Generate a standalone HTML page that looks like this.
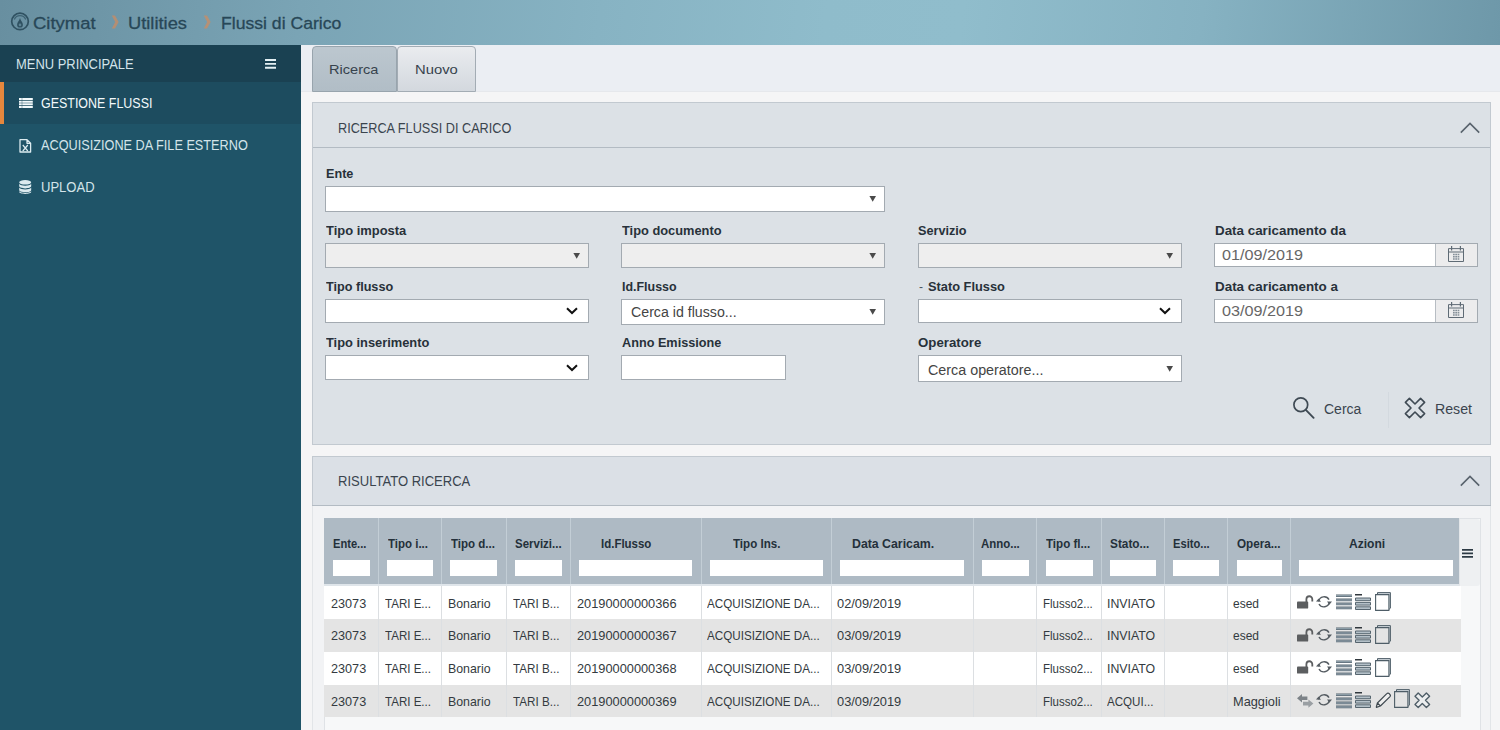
<!DOCTYPE html>
<html lang="it"><head><meta charset="utf-8"><title>Citymat - Flussi di Carico</title>
<style>
html,body{margin:0;padding:0;}
body{width:1500px;height:730px;overflow:hidden;position:relative;background:#f5f5f6;font-family:"Liberation Sans",sans-serif;}
.b{position:absolute;box-sizing:border-box;display:block;}
.t{position:absolute;white-space:nowrap;transform-origin:0 50%;display:block;}
</style></head><body>
<div class="b" style="left:0px;top:0px;width:1500px;height:45px;background:linear-gradient(97deg,#688fa0 0%,#7aa4b5 20%,#87b3c3 40%,#8fbccb 55%,#90bdcc 64%,#86b2c2 80%,#6e98a9 100%);"></div>
<svg class="b" style="left:9px;top:10px;" width="22" height="23" viewBox="0 0 22 23"><circle cx="11" cy="11.4" r="8.3" fill="none" stroke="#2f5161" stroke-width="1.7"/><path d="M5.3 9.4 A6.2 6.2 0 0 1 16.7 9.4" fill="none" stroke="#2f5161" stroke-width="1.2" opacity=".75"/><path d="M11 8 C11.7 10.8 13.9 12.4 13.9 14.7 A2.9 2.9 0 0 1 8.1 14.7 C8.1 12.4 10.3 10.8 11 8 Z" fill="#2f5161"/><circle cx="11" cy="14.9" r="1.3" fill="#6f97a8" opacity=".7"/></svg>
<span class="t" style="left:33.0px;top:15px;font-size:17.4px;line-height:17.4px;color:#274757;transform:scaleX(1.0615);-webkit-text-stroke:0.3px #274757;">Citymat</span>
<span class="t" style="left:128.4px;top:15px;font-size:17.4px;line-height:17.4px;color:#274757;transform:scaleX(1.0522);-webkit-text-stroke:0.3px #274757;">Utilities</span>
<span class="t" style="left:220.6px;top:15px;font-size:17.4px;line-height:17.4px;color:#274757;transform:scaleX(1.0124);-webkit-text-stroke:0.3px #274757;">Flussi di Carico</span>
<svg class="b" style="left:111.2px;top:15.0px;" width="9" height="14" viewBox="0 0 9 14"><path d="M0.8 0.6 L4 0.6 L7.6 7 L4 13.4 L0.8 13.4 L4.2 7 Z" fill="#d88a58" opacity=".66"/></svg>
<svg class="b" style="left:202.6px;top:15.0px;" width="9" height="14" viewBox="0 0 9 14"><path d="M0.8 0.6 L4 0.6 L7.6 7 L4 13.4 L0.8 13.4 L4.2 7 Z" fill="#d88a58" opacity=".66"/></svg>
<div class="b" style="left:0px;top:45px;width:301px;height:685px;background:#1f5468;"></div>
<div class="b" style="left:0px;top:45px;width:301px;height:37px;background:#1a4152;"></div>
<div class="b" style="left:0px;top:82px;width:301px;height:42px;background:#1d4c5f;"></div>
<div class="b" style="left:0px;top:82px;width:4px;height:42px;background:#e5873d;"></div>
<span class="t" style="left:16.0px;top:57px;font-size:14px;line-height:14px;color:#d3e4ea;transform:scaleX(0.9237);">MENU PRINCIPALE</span>
<svg class="b" style="left:264.6px;top:59px;" width="11.7" height="9.7" viewBox="0 0 12 10"><path d="M0 0h12v2H0zM0 4h12v2H0zM0 8h12v2H0z" fill="#e4f0f4"/></svg>
<span class="t" style="left:41.0px;top:96px;font-size:14px;line-height:14px;color:#f2f9fb;transform:scaleX(0.8894);">GESTIONE FLUSSI</span>
<span class="t" style="left:41.0px;top:138px;font-size:14px;line-height:14px;color:#d3e4ea;transform:scaleX(0.9073);">ACQUISIZIONE DA FILE ESTERNO</span>
<span class="t" style="left:41.2px;top:180px;font-size:14px;line-height:14px;color:#d3e4ea;transform:scaleX(0.9310);">UPLOAD</span>
<svg class="b" style="left:19px;top:98px;" width="14" height="10" viewBox="0 0 14 10"><g fill="#f2f9fb"><path d="M0 0h2.8v2H0zM3.2 0H13.8v2H3.2zM0 2.65h2.8v2H0zM3.2 2.65H13.8v2H3.2zM0 5.3h2.8v2H0zM3.2 5.3H13.8v2H3.2zM0 7.95h2.8v2H0zM3.2 7.95H13.8v2H3.2z"/></g></svg>
<svg class="b" style="left:18.6px;top:138.8px;" width="13" height="14" viewBox="0 0 13 14"><path d="M1 0.7H8L11.6 4.3V13H1Z M8 0.7V4.3H11.6" fill="none" stroke="#dcebf0" stroke-width="1.3" stroke-linejoin="round"/><path d="M3.8 6L8.8 12M8.8 6L3.8 12" stroke="#dcebf0" stroke-width="1.2"/></svg>
<svg class="b" style="left:18.8px;top:180.2px;" width="13" height="14" viewBox="0 0 13 14"><g fill="#dcebf0"><ellipse cx="6.2" cy="2.3" rx="6" ry="2.3"/><path d="M0.2 3.8c1 1.4 3.2 1.9 6 1.9s5-.5 6-1.9v2.3c0 1.3-2.7 2.3-6 2.3s-6-1-6-2.3z"/><path d="M0.2 7.6c1 1.4 3.2 1.9 6 1.9s5-.5 6-1.9v2.3c0 1.3-2.7 2.3-6 2.3s-6-1-6-2.3z" transform="translate(0,0)"/><path d="M0.2 11.2c1 1.2 3.2 1.7 6 1.7s5-.5 6-1.7v.6c0 1.3-2.7 2.1-6 2.1s-6-.8-6-2.1z"/></g></svg>
<div class="b" style="left:301px;top:45px;width:1199px;height:46px;background:#ebeef3;"></div>
<div class="b" style="left:301px;top:91px;width:1199px;height:1px;background:#e6e8ec;"></div>
<div class="b" style="left:312px;top:46px;width:85.4px;height:45.5px;background:linear-gradient(#bcc7cf,#b1bdc6);border:1px solid #98a4ad;border-radius:4px 4px 0 0;"></div>
<div class="b" style="left:397.3px;top:46px;width:78.9px;height:45.5px;background:linear-gradient(#eaecef,#d3d8de);border:1px solid #a3acb4;border-radius:4px 4px 0 0;"></div>
<span class="t" style="left:329.4px;top:63px;font-size:13.6px;line-height:13.6px;color:#37434d;transform:scaleX(1.0716);">Ricerca</span>
<span class="t" style="left:414.6px;top:63px;font-size:13.6px;line-height:13.6px;color:#37434d;transform:scaleX(1.0887);">Nuovo</span>
<div class="b" style="left:312px;top:102px;width:1179px;height:343px;background:#dce1e6;border:1px solid #c2c9d0;"></div>
<div class="b" style="left:313px;top:147px;width:1177px;height:1px;background:#b3bbc3;"></div>
<span class="t" style="left:338.0px;top:121px;font-size:14.4px;line-height:14.4px;color:#3a444e;transform:scaleX(0.8809);">RICERCA FLUSSI DI CARICO</span>
<svg class="b" style="left:1459.5px;top:122px;" width="20" height="12" viewBox="0 0 20 12"><path d="M0.8 10.6L10 1.4L19.2 10.6" fill="none" stroke="#59636d" stroke-width="1.6"/></svg>
<span class="t" style="left:325.6px;top:167px;font-size:13.2px;line-height:13.2px;color:#28313a;font-weight:bold;transform:scaleX(0.9579);">Ente</span>
<div class="b" style="left:325px;top:186px;width:560px;height:26px;background:#ffffff;border:1px solid #a3aab1;"></div>
<svg class="b" style="left:869px;top:196.0px;" width="8" height="7" viewBox="0 0 8 7"><path d="M0.4 0H7L3.7 5.8Z" fill="#4a4a4a"/></svg>
<span class="t" style="left:325.6px;top:224px;font-size:13.2px;line-height:13.2px;color:#28313a;font-weight:bold;transform:scaleX(0.9817);">Tipo imposta</span>
<div class="b" style="left:325px;top:243px;width:264px;height:25.4px;background:#eeeeee;border:1px solid #a3aab1;"></div>
<svg class="b" style="left:573px;top:252.7px;" width="8" height="7" viewBox="0 0 8 7"><path d="M0.4 0H7L3.7 5.8Z" fill="#4a4a4a"/></svg>
<span class="t" style="left:622.2px;top:224px;font-size:13.2px;line-height:13.2px;color:#28313a;font-weight:bold;transform:scaleX(0.9725);">Tipo documento</span>
<div class="b" style="left:621px;top:243px;width:264px;height:25.4px;background:#eeeeee;border:1px solid #a3aab1;"></div>
<svg class="b" style="left:869px;top:252.7px;" width="8" height="7" viewBox="0 0 8 7"><path d="M0.4 0H7L3.7 5.8Z" fill="#4a4a4a"/></svg>
<span class="t" style="left:918.4px;top:224px;font-size:13.2px;line-height:13.2px;color:#28313a;font-weight:bold;transform:scaleX(0.9601);">Servizio</span>
<div class="b" style="left:918px;top:243px;width:264px;height:25.4px;background:#eeeeee;border:1px solid #a3aab1;"></div>
<svg class="b" style="left:1166px;top:252.7px;" width="8" height="7" viewBox="0 0 8 7"><path d="M0.4 0H7L3.7 5.8Z" fill="#4a4a4a"/></svg>
<span class="t" style="left:1214.8px;top:224px;font-size:13.2px;line-height:13.2px;color:#28313a;font-weight:bold;transform:scaleX(1.0146);">Data caricamento da</span>
<div class="b" style="left:1214px;top:243px;width:264px;height:23.6px;background:#fff;border:1px solid #a3aab1;"></div>
<div class="b" style="left:1434.5px;top:244px;width:42.5px;height:21.6px;background:#ececed;border-left:1px solid #b7bdc3;"></div>
<svg class="b" style="left:1448px;top:246.2px;" width="16" height="16" viewBox="0 0 16 16"><g fill="none" stroke="#5f6b75" stroke-width="1"><path d="M0.5 2.6H15.5V15.5H0.5Z"/><path d="M0.5 6H15.5"/><path d="M3.6 0V4.4M12.4 0V4.4" stroke-width="1.2"/></g><g fill="#848f98"><path d="M5 7.8h1.7v1.5H5zM7.3 7.8h1.7v1.5H7.3zM9.6 7.8h1.7v1.5H9.6zM5 10h1.7v1.5H5zM7.3 10h1.7v1.5H7.3zM9.6 10h1.7v1.5H9.6zM5 12.2h1.7v1.5H5zM7.3 12.2h1.7v1.5H7.3zM9.6 12.2h1.7v1.5H9.6z"/></g></svg>
<span class="t" style="left:1221.6px;top:247px;font-size:15px;line-height:15px;color:#666;transform:scaleX(1.0789);">01/09/2019</span>
<span class="t" style="left:325.6px;top:280px;font-size:13.2px;line-height:13.2px;color:#28313a;font-weight:bold;transform:scaleX(0.9578);">Tipo flusso</span>
<div class="b" style="left:325px;top:299px;width:264px;height:23.6px;background:#fff;border:1px solid #a3aab1;"></div>
<svg class="b" style="left:565.8px;top:307.2px;" width="12" height="8" viewBox="0 0 12 8"><path d="M1 1.2L6 6L11 1.2" fill="none" stroke="#111" stroke-width="2"/></svg>
<span class="t" style="left:622.2px;top:280px;font-size:13.2px;line-height:13.2px;color:#28313a;font-weight:bold;transform:scaleX(0.9424);">Id.Flusso</span>
<div class="b" style="left:621px;top:299px;width:264px;height:26px;background:#ffffff;border:1px solid #a3aab1;"></div>
<svg class="b" style="left:869px;top:309.0px;" width="8" height="7" viewBox="0 0 8 7"><path d="M0.4 0H7L3.7 5.8Z" fill="#4a4a4a"/></svg>
<span class="t" style="left:630.8px;top:305px;font-size:14px;line-height:14px;color:#444;transform:scaleX(1.0128);">Cerca id flusso...</span>
<span class="t" style="left:918.6px;top:280px;font-size:13.2px;line-height:13.2px;color:#4a545d;transform:scaleX(0.9100);">-</span>
<span class="t" style="left:927.8px;top:280px;font-size:13.2px;line-height:13.2px;color:#28313a;font-weight:bold;transform:scaleX(0.9721);">Stato Flusso</span>
<div class="b" style="left:918px;top:299px;width:264px;height:23.6px;background:#fff;border:1px solid #a3aab1;"></div>
<svg class="b" style="left:1158.8px;top:307.2px;" width="12" height="8" viewBox="0 0 12 8"><path d="M1 1.2L6 6L11 1.2" fill="none" stroke="#111" stroke-width="2"/></svg>
<span class="t" style="left:1214.8px;top:280px;font-size:13.2px;line-height:13.2px;color:#28313a;font-weight:bold;transform:scaleX(1.0161);">Data caricamento a</span>
<div class="b" style="left:1214px;top:299px;width:264px;height:23.6px;background:#fff;border:1px solid #a3aab1;"></div>
<div class="b" style="left:1434.5px;top:300px;width:42.5px;height:21.6px;background:#ececed;border-left:1px solid #b7bdc3;"></div>
<svg class="b" style="left:1448px;top:302.2px;" width="16" height="16" viewBox="0 0 16 16"><g fill="none" stroke="#5f6b75" stroke-width="1"><path d="M0.5 2.6H15.5V15.5H0.5Z"/><path d="M0.5 6H15.5"/><path d="M3.6 0V4.4M12.4 0V4.4" stroke-width="1.2"/></g><g fill="#848f98"><path d="M5 7.8h1.7v1.5H5zM7.3 7.8h1.7v1.5H7.3zM9.6 7.8h1.7v1.5H9.6zM5 10h1.7v1.5H5zM7.3 10h1.7v1.5H7.3zM9.6 10h1.7v1.5H9.6zM5 12.2h1.7v1.5H5zM7.3 12.2h1.7v1.5H7.3zM9.6 12.2h1.7v1.5H9.6z"/></g></svg>
<span class="t" style="left:1221.6px;top:303px;font-size:15px;line-height:15px;color:#666;transform:scaleX(1.0789);">03/09/2019</span>
<span class="t" style="left:325.6px;top:336px;font-size:13.2px;line-height:13.2px;color:#28313a;font-weight:bold;transform:scaleX(0.9745);">Tipo inserimento</span>
<div class="b" style="left:325px;top:355.4px;width:264px;height:24.2px;background:#fff;border:1px solid #a3aab1;"></div>
<svg class="b" style="left:565.8px;top:363.9px;" width="12" height="8" viewBox="0 0 12 8"><path d="M1 1.2L6 6L11 1.2" fill="none" stroke="#111" stroke-width="2"/></svg>
<span class="t" style="left:622.2px;top:336px;font-size:13.2px;line-height:13.2px;color:#28313a;font-weight:bold;transform:scaleX(0.9612);">Anno Emissione</span>
<div class="b" style="left:621px;top:355.4px;width:165px;height:24.2px;background:#fff;border:1px solid #a3aab1;"></div>
<span class="t" style="left:918.4px;top:336px;font-size:13.2px;line-height:13.2px;color:#28313a;font-weight:bold;transform:scaleX(1.0050);">Operatore</span>
<div class="b" style="left:918px;top:355.4px;width:264px;height:26.6px;background:#ffffff;border:1px solid #a3aab1;"></div>
<svg class="b" style="left:1166px;top:365.7px;" width="8" height="7" viewBox="0 0 8 7"><path d="M0.4 0H7L3.7 5.8Z" fill="#4a4a4a"/></svg>
<span class="t" style="left:927.8px;top:363px;font-size:14px;line-height:14px;color:#444;transform:scaleX(1.0227);">Cerca operatore...</span>
<svg class="b" style="left:1292px;top:395.6px;" width="23" height="23" viewBox="0 0 23 23"><circle cx="8.8" cy="8.8" r="6.9" fill="none" stroke="#3f4a54" stroke-width="1.7"/><path d="M13.8 13.8L21.6 21.8" stroke="#3f4a54" stroke-width="1.9" stroke-linecap="round"/></svg>
<span class="t" style="left:1324.0px;top:402px;font-size:14px;line-height:14px;color:#3a444e;">Cerca</span>
<div class="b" style="left:1388px;top:392px;width:1px;height:36px;background:#d3d9df;"></div>
<svg class="b" style="left:1404px;top:396.6px;" width="22" height="22" viewBox="0 0 22 22"><path d="M5.4 1.4L11 7L16.6 1.4L20.6 5.4L15 11L20.6 16.6L16.6 20.6L11 15L5.4 20.6L1.4 16.6L7 11L1.4 5.4Z" fill="none" stroke="#3f4a54" stroke-width="1.6" stroke-linejoin="round"/></svg>
<span class="t" style="left:1435.2px;top:402px;font-size:14px;line-height:14px;color:#3a444e;transform:scaleX(1.0117);">Reset</span>
<div class="b" style="left:312px;top:456px;width:1179px;height:290px;background:#f2f3f5;border:1px solid #e2e5e8;border-bottom:0;"></div>
<div class="b" style="left:312px;top:456px;width:1179px;height:50px;background:#dbe0e6;border:1px solid #c2c9d0;border-bottom:0;"></div>
<div class="b" style="left:312px;top:505px;width:1179px;height:1px;background:#b3bbc3;"></div>
<span class="t" style="left:338.0px;top:474px;font-size:14.4px;line-height:14.4px;color:#3a444e;transform:scaleX(0.9059);">RISULTATO RICERCA</span>
<svg class="b" style="left:1459.5px;top:475px;" width="20" height="12" viewBox="0 0 20 12"><path d="M0.8 10.6L10 1.4L19.2 10.6" fill="none" stroke="#59636d" stroke-width="1.6"/></svg>
<div class="b" style="left:324px;top:518px;width:1156.6px;height:212px;background:#f7f8f9;border:1px solid #dfe2e6;border-bottom:0;"></div>
<div class="b" style="left:324.4px;top:518.4px;width:1134.2px;height:66px;background:#aebac4;"></div>
<div class="b" style="left:324.4px;top:584.4px;width:1134.2px;height:1.6px;background:#dfe5ea;"></div>
<div class="b" style="left:1458.6px;top:519px;width:21.4px;height:67px;background:#eef0f2;border-radius:0 3px 3px 0;border-left:1px solid #e3e6e9;"></div>
<svg class="b" style="left:1462.4px;top:549px;" width="11" height="9" viewBox="0 0 11 9"><path d="M0 0h11v1.8H0zM0 3.5h11v1.8H0zM0 7h11v1.8H0z" fill="#2c3a44"/></svg>
<div class="b" style="left:324.4px;top:586.3px;width:1136.3px;height:32.90000000000009px;background:#ffffff;"></div>
<div class="b" style="left:324.4px;top:619.2px;width:1136.3px;height:32.59999999999991px;background:#e4e4e4;"></div>
<div class="b" style="left:324.4px;top:651.8px;width:1136.3px;height:32.90000000000009px;background:#ffffff;"></div>
<div class="b" style="left:324.4px;top:684.7px;width:1136.3px;height:32.09999999999991px;background:#e4e4e4;"></div>
<div class="b" style="left:377.9px;top:518.4px;width:1px;height:66px;background:#c3ced6;"></div>
<div class="b" style="left:377.9px;top:586.3px;width:1px;height:131px;background:#dcdfe2;"></div>
<div class="b" style="left:440.9px;top:518.4px;width:1px;height:66px;background:#c3ced6;"></div>
<div class="b" style="left:440.9px;top:586.3px;width:1px;height:131px;background:#dcdfe2;"></div>
<div class="b" style="left:505.5px;top:518.4px;width:1px;height:66px;background:#c3ced6;"></div>
<div class="b" style="left:505.5px;top:586.3px;width:1px;height:131px;background:#dcdfe2;"></div>
<div class="b" style="left:569.9px;top:518.4px;width:1px;height:66px;background:#c3ced6;"></div>
<div class="b" style="left:569.9px;top:586.3px;width:1px;height:131px;background:#dcdfe2;"></div>
<div class="b" style="left:700.9px;top:518.4px;width:1px;height:66px;background:#c3ced6;"></div>
<div class="b" style="left:700.9px;top:586.3px;width:1px;height:131px;background:#dcdfe2;"></div>
<div class="b" style="left:831.3px;top:518.4px;width:1px;height:66px;background:#c3ced6;"></div>
<div class="b" style="left:831.3px;top:586.3px;width:1px;height:131px;background:#dcdfe2;"></div>
<div class="b" style="left:973.1px;top:518.4px;width:1px;height:66px;background:#c3ced6;"></div>
<div class="b" style="left:973.1px;top:586.3px;width:1px;height:131px;background:#dcdfe2;"></div>
<div class="b" style="left:1036.1px;top:518.4px;width:1px;height:66px;background:#c3ced6;"></div>
<div class="b" style="left:1036.1px;top:586.3px;width:1px;height:131px;background:#dcdfe2;"></div>
<div class="b" style="left:1100.5px;top:518.4px;width:1px;height:66px;background:#c3ced6;"></div>
<div class="b" style="left:1100.5px;top:586.3px;width:1px;height:131px;background:#dcdfe2;"></div>
<div class="b" style="left:1163.9px;top:518.4px;width:1px;height:66px;background:#c3ced6;"></div>
<div class="b" style="left:1163.9px;top:586.3px;width:1px;height:131px;background:#dcdfe2;"></div>
<div class="b" style="left:1227.1px;top:518.4px;width:1px;height:66px;background:#c3ced6;"></div>
<div class="b" style="left:1227.1px;top:586.3px;width:1px;height:131px;background:#dcdfe2;"></div>
<div class="b" style="left:1290.1px;top:518.4px;width:1px;height:66px;background:#c3ced6;"></div>
<div class="b" style="left:1290.1px;top:586.3px;width:1px;height:131px;background:#dcdfe2;"></div>
<span class="t" style="left:333.2px;top:538px;font-size:12.6px;line-height:12.6px;color:#24303a;font-weight:bold;transform:scaleX(0.8834);">Ente...</span>
<span class="t" style="left:387.6px;top:538px;font-size:12.6px;line-height:12.6px;color:#24303a;font-weight:bold;transform:scaleX(0.9119);">Tipo i...</span>
<span class="t" style="left:450.6px;top:538px;font-size:12.6px;line-height:12.6px;color:#24303a;font-weight:bold;transform:scaleX(0.9155);">Tipo d...</span>
<span class="t" style="left:514.8px;top:538px;font-size:12.6px;line-height:12.6px;color:#24303a;font-weight:bold;transform:scaleX(0.9115);">Servizi...</span>
<span class="t" style="left:601.4px;top:538px;font-size:12.6px;line-height:12.6px;color:#24303a;font-weight:bold;transform:scaleX(0.9113);">Id.Flusso</span>
<span class="t" style="left:733.4px;top:538px;font-size:12.6px;line-height:12.6px;color:#24303a;font-weight:bold;transform:scaleX(0.9191);">Tipo Ins.</span>
<span class="t" style="left:852.0px;top:538px;font-size:12.6px;line-height:12.6px;color:#24303a;font-weight:bold;transform:scaleX(0.9781);">Data Caricam.</span>
<span class="t" style="left:981.4px;top:538px;font-size:12.6px;line-height:12.6px;color:#24303a;font-weight:bold;transform:scaleX(0.9088);">Anno...</span>
<span class="t" style="left:1046.0px;top:538px;font-size:12.6px;line-height:12.6px;color:#24303a;font-weight:bold;transform:scaleX(0.9196);">Tipo fl...</span>
<span class="t" style="left:1110.0px;top:538px;font-size:12.6px;line-height:12.6px;color:#24303a;font-weight:bold;transform:scaleX(0.9380);">Stato...</span>
<span class="t" style="left:1173.0px;top:538px;font-size:12.6px;line-height:12.6px;color:#24303a;font-weight:bold;transform:scaleX(0.8860);">Esito...</span>
<span class="t" style="left:1236.6px;top:538px;font-size:12.6px;line-height:12.6px;color:#24303a;font-weight:bold;transform:scaleX(0.9293);">Opera...</span>
<span class="t" style="left:1349.0px;top:538px;font-size:12.6px;line-height:12.6px;color:#24303a;font-weight:bold;transform:scaleX(0.9578);">Azioni</span>
<div class="b" style="left:333px;top:560px;width:37.4px;height:16px;background:#fff;"></div>
<div class="b" style="left:387.4px;top:560px;width:45.6px;height:16px;background:#fff;"></div>
<div class="b" style="left:450px;top:560px;width:47.4px;height:16px;background:#fff;"></div>
<div class="b" style="left:514.6px;top:560px;width:47.0px;height:16px;background:#fff;"></div>
<div class="b" style="left:579px;top:560px;width:113.4px;height:16px;background:#fff;"></div>
<div class="b" style="left:709.6px;top:560px;width:113.4px;height:16px;background:#fff;"></div>
<div class="b" style="left:840px;top:560px;width:124.4px;height:16px;background:#fff;"></div>
<div class="b" style="left:981.6px;top:560px;width:47.4px;height:16px;background:#fff;"></div>
<div class="b" style="left:1046px;top:560px;width:47.4px;height:16px;background:#fff;"></div>
<div class="b" style="left:1110px;top:560px;width:46px;height:16px;background:#fff;"></div>
<div class="b" style="left:1173px;top:560px;width:46.4px;height:16px;background:#fff;"></div>
<div class="b" style="left:1236.6px;top:560px;width:45.4px;height:16px;background:#fff;"></div>
<div class="b" style="left:1299px;top:560px;width:154.4px;height:16px;background:#fff;"></div>
<span class="t" style="left:330.8px;top:598px;font-size:12.6px;line-height:12.6px;color:#333a40;transform:scaleX(1.0046);">23073</span>
<span class="t" style="left:385.0px;top:598px;font-size:12.6px;line-height:12.6px;color:#333a40;transform:scaleX(0.9168);">TARI E...</span>
<span class="t" style="left:448.4px;top:598px;font-size:12.6px;line-height:12.6px;color:#333a40;transform:scaleX(0.9809);">Bonario</span>
<span class="t" style="left:512.6px;top:598px;font-size:12.6px;line-height:12.6px;color:#333a40;transform:scaleX(0.9248);">TARI B...</span>
<span class="t" style="left:576.8px;top:598px;font-size:12.6px;line-height:12.6px;color:#333a40;transform:scaleX(1.0152);">20190000000366</span>
<span class="t" style="left:707.2px;top:598px;font-size:12.6px;line-height:12.6px;color:#333a40;transform:scaleX(0.9260);">ACQUISIZIONE DA...</span>
<span class="t" style="left:837.4px;top:598px;font-size:12.6px;line-height:12.6px;color:#333a40;transform:scaleX(1.0180);">02/09/2019</span>
<span class="t" style="left:1043.4px;top:598px;font-size:12.6px;line-height:12.6px;color:#333a40;transform:scaleX(0.9117);">Flusso2...</span>
<span class="t" style="left:1107.4px;top:598px;font-size:12.6px;line-height:12.6px;color:#333a40;transform:scaleX(0.9788);">INVIATO</span>
<span class="t" style="left:1233.4px;top:598px;font-size:12.6px;line-height:12.6px;color:#333a40;transform:scaleX(0.9516);">esed</span>
<span class="t" style="left:330.8px;top:630px;font-size:12.6px;line-height:12.6px;color:#333a40;transform:scaleX(1.0046);">23073</span>
<span class="t" style="left:385.0px;top:630px;font-size:12.6px;line-height:12.6px;color:#333a40;transform:scaleX(0.9168);">TARI E...</span>
<span class="t" style="left:448.4px;top:630px;font-size:12.6px;line-height:12.6px;color:#333a40;transform:scaleX(0.9809);">Bonario</span>
<span class="t" style="left:512.6px;top:630px;font-size:12.6px;line-height:12.6px;color:#333a40;transform:scaleX(0.9248);">TARI B...</span>
<span class="t" style="left:576.8px;top:630px;font-size:12.6px;line-height:12.6px;color:#333a40;transform:scaleX(1.0152);">20190000000367</span>
<span class="t" style="left:707.2px;top:630px;font-size:12.6px;line-height:12.6px;color:#333a40;transform:scaleX(0.9260);">ACQUISIZIONE DA...</span>
<span class="t" style="left:837.4px;top:630px;font-size:12.6px;line-height:12.6px;color:#333a40;transform:scaleX(1.0180);">03/09/2019</span>
<span class="t" style="left:1043.4px;top:630px;font-size:12.6px;line-height:12.6px;color:#333a40;transform:scaleX(0.9117);">Flusso2...</span>
<span class="t" style="left:1107.4px;top:630px;font-size:12.6px;line-height:12.6px;color:#333a40;transform:scaleX(0.9788);">INVIATO</span>
<span class="t" style="left:1233.4px;top:630px;font-size:12.6px;line-height:12.6px;color:#333a40;transform:scaleX(0.9516);">esed</span>
<span class="t" style="left:330.8px;top:663px;font-size:12.6px;line-height:12.6px;color:#333a40;transform:scaleX(1.0046);">23073</span>
<span class="t" style="left:385.0px;top:663px;font-size:12.6px;line-height:12.6px;color:#333a40;transform:scaleX(0.9168);">TARI E...</span>
<span class="t" style="left:448.4px;top:663px;font-size:12.6px;line-height:12.6px;color:#333a40;transform:scaleX(0.9809);">Bonario</span>
<span class="t" style="left:512.6px;top:663px;font-size:12.6px;line-height:12.6px;color:#333a40;transform:scaleX(0.9248);">TARI B...</span>
<span class="t" style="left:576.8px;top:663px;font-size:12.6px;line-height:12.6px;color:#333a40;transform:scaleX(1.0152);">20190000000368</span>
<span class="t" style="left:707.2px;top:663px;font-size:12.6px;line-height:12.6px;color:#333a40;transform:scaleX(0.9260);">ACQUISIZIONE DA...</span>
<span class="t" style="left:837.4px;top:663px;font-size:12.6px;line-height:12.6px;color:#333a40;transform:scaleX(1.0180);">03/09/2019</span>
<span class="t" style="left:1043.4px;top:663px;font-size:12.6px;line-height:12.6px;color:#333a40;transform:scaleX(0.9117);">Flusso2...</span>
<span class="t" style="left:1107.4px;top:663px;font-size:12.6px;line-height:12.6px;color:#333a40;transform:scaleX(0.9788);">INVIATO</span>
<span class="t" style="left:1233.4px;top:663px;font-size:12.6px;line-height:12.6px;color:#333a40;transform:scaleX(0.9516);">esed</span>
<span class="t" style="left:330.8px;top:696px;font-size:12.6px;line-height:12.6px;color:#333a40;transform:scaleX(1.0046);">23073</span>
<span class="t" style="left:385.0px;top:696px;font-size:12.6px;line-height:12.6px;color:#333a40;transform:scaleX(0.9168);">TARI E...</span>
<span class="t" style="left:448.4px;top:696px;font-size:12.6px;line-height:12.6px;color:#333a40;transform:scaleX(0.9809);">Bonario</span>
<span class="t" style="left:512.6px;top:696px;font-size:12.6px;line-height:12.6px;color:#333a40;transform:scaleX(0.9248);">TARI B...</span>
<span class="t" style="left:576.8px;top:696px;font-size:12.6px;line-height:12.6px;color:#333a40;transform:scaleX(1.0152);">20190000000369</span>
<span class="t" style="left:707.2px;top:696px;font-size:12.6px;line-height:12.6px;color:#333a40;transform:scaleX(0.9260);">ACQUISIZIONE DA...</span>
<span class="t" style="left:837.4px;top:696px;font-size:12.6px;line-height:12.6px;color:#333a40;transform:scaleX(1.0180);">03/09/2019</span>
<span class="t" style="left:1043.4px;top:696px;font-size:12.6px;line-height:12.6px;color:#333a40;transform:scaleX(0.9117);">Flusso2...</span>
<span class="t" style="left:1107.4px;top:696px;font-size:12.6px;line-height:12.6px;color:#333a40;transform:scaleX(0.9205);">ACQUI...</span>
<span class="t" style="left:1233.4px;top:696px;font-size:12.6px;line-height:12.6px;color:#333a40;transform:scaleX(1.0144);">Maggioli</span>
<svg class="b" style="left:1296.8px;top:594.6999999999999px;" width="17" height="14" viewBox="0 0 17 14"><rect x="0" y="6.5" width="11.2" height="7.1" rx="0.9" fill="#5c5e60"/><path d="M9.4 7.2V4.2A2.95 2.95 0 0 1 15.3 4.2V6.6" fill="none" stroke="#5c5e60" stroke-width="1.8"/></svg>
<svg class="b" style="left:1316px;top:594.8px;" width="16" height="14" viewBox="0 0 16 14"><g fill="none" stroke="#555c62" stroke-width="1.4"><path d="M2.6 6.4A5.6 5.6 0 0 1 13 4.6"/><path d="M13.4 7.2A5.6 5.6 0 0 1 3 9"/></g><path d="M0 6.6L2.6 3.4L5 6.8Z M16 6.6L13.4 9.8L11 6.4Z" fill="#555c62"/></svg>
<svg class="b" style="left:1336px;top:594.0999999999999px;" width="16" height="16" viewBox="0 0 16 16"><g fill="#56656f"><path d="M0 0.4h16v2.6H0zM0 4.6h16v2.6H0zM0 8.6h16v2.6H0zM0 12.6h16v2.6H0z"/></g><g fill="#9fb0bb"><path d="M0 1.3h16v.9H0zM0 5.5h16v.9H0zM0 9.5h16v.9H0zM0 13.5h16v.9H0z"/></g></svg>
<svg class="b" style="left:1355px;top:593.9px;" width="16" height="17" viewBox="0 0 16 17"><path d="M0 0h7v1.5H0z" fill="#30373d"/><g fill="#b4c0c8" stroke="#56656f" stroke-width="1"><path d="M0.5 4H15.5V6.7H0.5zM0.5 8.4H15.5V11.1H0.5zM0.5 12.8H15.5V15.5H0.5z"/></g></svg>
<svg class="b" style="left:1374.6px;top:592.3px;" width="16" height="19" viewBox="0 0 16 19"><path d="M2.5 2.4V0.6H15.4V16.2L13.9 17.5" fill="#cfd6db" stroke="#4e5d67" stroke-width="1"/><path d="M0.6 2.6H13.9V18.4H0.6Z" fill="#ffffff" stroke="#4e5d67" stroke-width="1.1"/></svg>
<svg class="b" style="left:1296.8px;top:627.6px;" width="17" height="14" viewBox="0 0 17 14"><rect x="0" y="6.5" width="11.2" height="7.1" rx="0.9" fill="#5c5e60"/><path d="M9.4 7.2V4.2A2.95 2.95 0 0 1 15.3 4.2V6.6" fill="none" stroke="#5c5e60" stroke-width="1.8"/></svg>
<svg class="b" style="left:1316px;top:627.7px;" width="16" height="14" viewBox="0 0 16 14"><g fill="none" stroke="#555c62" stroke-width="1.4"><path d="M2.6 6.4A5.6 5.6 0 0 1 13 4.6"/><path d="M13.4 7.2A5.6 5.6 0 0 1 3 9"/></g><path d="M0 6.6L2.6 3.4L5 6.8Z M16 6.6L13.4 9.8L11 6.4Z" fill="#555c62"/></svg>
<svg class="b" style="left:1336px;top:627.0px;" width="16" height="16" viewBox="0 0 16 16"><g fill="#56656f"><path d="M0 0.4h16v2.6H0zM0 4.6h16v2.6H0zM0 8.6h16v2.6H0zM0 12.6h16v2.6H0z"/></g><g fill="#9fb0bb"><path d="M0 1.3h16v.9H0zM0 5.5h16v.9H0zM0 9.5h16v.9H0zM0 13.5h16v.9H0z"/></g></svg>
<svg class="b" style="left:1355px;top:626.8000000000001px;" width="16" height="17" viewBox="0 0 16 17"><path d="M0 0h7v1.5H0z" fill="#30373d"/><g fill="#b4c0c8" stroke="#56656f" stroke-width="1"><path d="M0.5 4H15.5V6.7H0.5zM0.5 8.4H15.5V11.1H0.5zM0.5 12.8H15.5V15.5H0.5z"/></g></svg>
<svg class="b" style="left:1374.6px;top:625.2px;" width="16" height="19" viewBox="0 0 16 19"><path d="M2.5 2.4V0.6H15.4V16.2L13.9 17.5" fill="#cfd6db" stroke="#4e5d67" stroke-width="1"/><path d="M0.6 2.6H13.9V18.4H0.6Z" fill="#e4e4e4" stroke="#4e5d67" stroke-width="1.1"/></svg>
<svg class="b" style="left:1296.8px;top:660.1999999999999px;" width="17" height="14" viewBox="0 0 17 14"><rect x="0" y="6.5" width="11.2" height="7.1" rx="0.9" fill="#5c5e60"/><path d="M9.4 7.2V4.2A2.95 2.95 0 0 1 15.3 4.2V6.6" fill="none" stroke="#5c5e60" stroke-width="1.8"/></svg>
<svg class="b" style="left:1316px;top:660.3px;" width="16" height="14" viewBox="0 0 16 14"><g fill="none" stroke="#555c62" stroke-width="1.4"><path d="M2.6 6.4A5.6 5.6 0 0 1 13 4.6"/><path d="M13.4 7.2A5.6 5.6 0 0 1 3 9"/></g><path d="M0 6.6L2.6 3.4L5 6.8Z M16 6.6L13.4 9.8L11 6.4Z" fill="#555c62"/></svg>
<svg class="b" style="left:1336px;top:659.5999999999999px;" width="16" height="16" viewBox="0 0 16 16"><g fill="#56656f"><path d="M0 0.4h16v2.6H0zM0 4.6h16v2.6H0zM0 8.6h16v2.6H0zM0 12.6h16v2.6H0z"/></g><g fill="#9fb0bb"><path d="M0 1.3h16v.9H0zM0 5.5h16v.9H0zM0 9.5h16v.9H0zM0 13.5h16v.9H0z"/></g></svg>
<svg class="b" style="left:1355px;top:659.4px;" width="16" height="17" viewBox="0 0 16 17"><path d="M0 0h7v1.5H0z" fill="#30373d"/><g fill="#b4c0c8" stroke="#56656f" stroke-width="1"><path d="M0.5 4H15.5V6.7H0.5zM0.5 8.4H15.5V11.1H0.5zM0.5 12.8H15.5V15.5H0.5z"/></g></svg>
<svg class="b" style="left:1374.6px;top:657.8px;" width="16" height="19" viewBox="0 0 16 19"><path d="M2.5 2.4V0.6H15.4V16.2L13.9 17.5" fill="#cfd6db" stroke="#4e5d67" stroke-width="1"/><path d="M0.6 2.6H13.9V18.4H0.6Z" fill="#ffffff" stroke="#4e5d67" stroke-width="1.1"/></svg>
<svg class="b" style="left:1296.8px;top:693.7px;" width="17" height="14" viewBox="0 0 17 14"><path d="M0 4.2L5 0V2.4H10.4V6H5V8.4Z" fill="#7d8388"/><path d="M16.4 9.6L11.4 5.4V7.8H6V11.4H11.4V13.8Z" fill="#9a9fa3"/></svg>
<svg class="b" style="left:1316px;top:693.2px;" width="16" height="14" viewBox="0 0 16 14"><g fill="none" stroke="#555c62" stroke-width="1.4"><path d="M2.6 6.4A5.6 5.6 0 0 1 13 4.6"/><path d="M13.4 7.2A5.6 5.6 0 0 1 3 9"/></g><path d="M0 6.6L2.6 3.4L5 6.8Z M16 6.6L13.4 9.8L11 6.4Z" fill="#555c62"/></svg>
<svg class="b" style="left:1336px;top:692.5px;" width="16" height="16" viewBox="0 0 16 16"><g fill="#56656f"><path d="M0 0.4h16v2.6H0zM0 4.6h16v2.6H0zM0 8.6h16v2.6H0zM0 12.6h16v2.6H0z"/></g><g fill="#9fb0bb"><path d="M0 1.3h16v.9H0zM0 5.5h16v.9H0zM0 9.5h16v.9H0zM0 13.5h16v.9H0z"/></g></svg>
<svg class="b" style="left:1355px;top:692.3000000000001px;" width="16" height="17" viewBox="0 0 16 17"><path d="M0 0h7v1.5H0z" fill="#30373d"/><g fill="#b4c0c8" stroke="#56656f" stroke-width="1"><path d="M0.5 4H15.5V6.7H0.5zM0.5 8.4H15.5V11.1H0.5zM0.5 12.8H15.5V15.5H0.5z"/></g></svg>
<svg class="b" style="left:1375px;top:691.7px;" width="16" height="16" viewBox="0 0 16 16"><path d="M1.4 14.6L2.4 11L11.8 1.6A1.6 1.6 0 0 1 14.2 1.6L15 2.6A1.6 1.6 0 0 1 15 4.6L5.4 14L1.4 15.4Z M2.4 11L5.4 14" fill="#eee" stroke="#3f4950" stroke-width="1.2" stroke-linejoin="round"/></svg>
<svg class="b" style="left:1394px;top:689.1px;" width="16" height="19" viewBox="0 0 16 19"><path d="M2.5 2.4V0.6H15.4V16.2L13.9 17.5" fill="#cfd6db" stroke="#4e5d67" stroke-width="1"/><path d="M0.6 2.6H13.9V18.4H0.6Z" fill="#e4e4e4" stroke="#4e5d67" stroke-width="1.1"/></svg>
<svg class="b" style="left:1413.6px;top:691.5px;" width="17" height="17" viewBox="0 0 17 17"><path d="M4.2 1L8.3 5.1L12.4 1L15.6 4.2L11.5 8.3L15.6 12.4L12.4 15.6L8.3 11.5L4.2 15.6L1 12.4L5.1 8.3L1 4.2Z" fill="#eceeef" stroke="#4e5d67" stroke-width="1.35" stroke-linejoin="round"/></svg>
</body></html>
